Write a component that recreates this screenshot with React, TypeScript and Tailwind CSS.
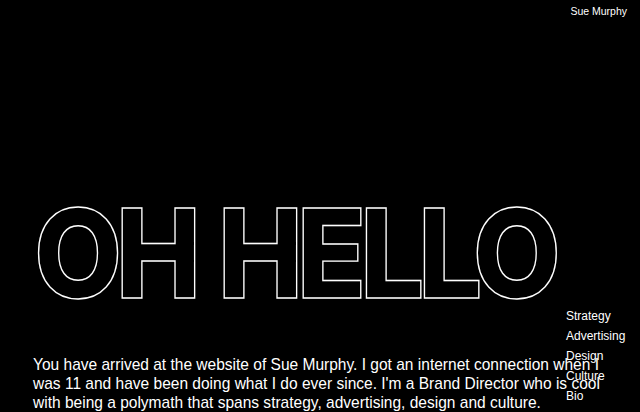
export default function App() {
  return (
    <div className="relative h-[412px] w-[640px] overflow-hidden bg-black font-['Liberation_Sans',Arial,sans-serif] text-white">
      <header className="flex justify-end pr-[13px] pt-[5px] text-[10.5px] leading-[13px]">Sue Murphy</header>
      <h1 className="ml-[34px] mt-[173px] origin-left scale-x-[0.92] whitespace-nowrap font-['Inter',sans-serif] text-[124px] font-extrabold leading-[124px] tracking-[-7px] text-transparent [-webkit-text-stroke:1.4px_white]">
        OH <span className="ml-[5px]">HELLO</span>
      </h1>
      <p className="ml-[33px] mt-[40px] origin-left scale-x-[0.913] whitespace-nowrap text-[17px] leading-[19px]">
        You have arrived at the website of Sue Murphy. I got an internet connection when I<br />
        was 11 and have been doing what I do ever since. I'm a Brand Director who is cool<br />
        with being a polymath that spans strategy, advertising, design and culture.
      </p>
      <nav className="absolute left-[566px] top-[306px] flex flex-col text-[12px] leading-[20px]">
        <a>Strategy</a>
        <a>Advertising</a>
        <a>Design</a>
        <a>Culture</a>
        <a>Bio</a>
      </nav>
    </div>
  );
}
